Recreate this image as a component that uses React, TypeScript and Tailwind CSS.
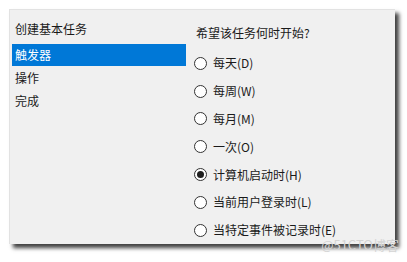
import React from 'react';

const steps = ['创建基本任务', '触发器', '操作', '完成'];

const options = [
  { label: '每天(D)', checked: false },
  { label: '每周(W)', checked: false },
  { label: '每月(M)', checked: false },
  { label: '一次(O)', checked: false },
  { label: '计算机启动时(H)', checked: true },
  { label: '当前用户登录时(L)', checked: false },
  { label: '当特定事件被记录时(E)', checked: false },
];

const Radio: React.FC<{ checked: boolean }> = ({ checked }) => (
  <span className="flex h-[13px] w-[13px] shrink-0 items-center justify-center rounded-full border border-[#333] bg-white">
    {checked && <span className="h-[7px] w-[7px] rounded-full bg-[#1f1f1f]" />}
  </span>
);

export default function App() {
  return (
    <div
      className="relative h-[262px] w-[407px] overflow-hidden bg-white pl-[9px] pt-[9px] text-[12px] text-[#1a1a1a]"
      style={{ fontFamily: '"Noto Sans CJK SC", "Noto Sans", sans-serif' }}
    >
      <div className="flex h-[235px] w-[386px] border-l border-t border-[#e2e2e2] bg-[#f0f0f0] shadow-[4px_4px_4px_rgba(0,0,0,0.75)]">
        {/* step list */}
        <div className="flex w-[180px] flex-col gap-[1px] pl-[2px] pt-[8px]">
          {steps.map((s, i) => (
            <div
              key={s}
              className={
                'flex h-[22px] w-[174px] items-center pl-[3px] ' +
                (i === 0 ? 'mb-[3px] ' : '') +
                (i === 1 ? 'bg-[#0078d7] text-white' : '')
              }
            >
              {s}
            </div>
          ))}
        </div>

        {/* trigger options */}
        <div className="flex flex-col pl-[4px] pt-[12px]">
          <div className="flex h-[22px] items-center pl-[2px]">希望该任务何时开始?</div>
          <div className="mt-[6px] flex flex-col">
            {options.map((o) => (
              <div key={o.label} className="flex h-[27.8px] items-center gap-[6px]">
                <Radio checked={o.checked} />
                <span>{o.label}</span>
              </div>
            ))}
          </div>
        </div>
      </div>

      <div className="absolute bottom-[8px] right-[8px] text-[13px] text-[#d4d4d4]">@51CTO博客</div>
    </div>
  );
}
